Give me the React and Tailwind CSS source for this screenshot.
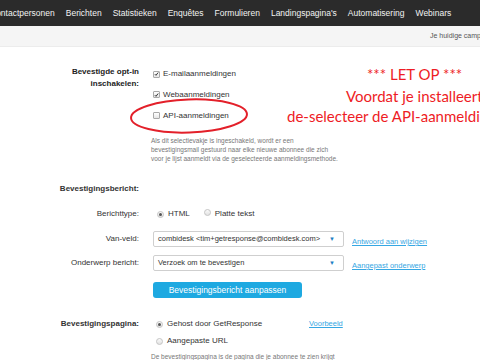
import React from 'react';

const navItems = ['Contactpersonen', 'Berichten', 'Statistieken', 'Enquêtes', 'Formulieren', "Landingspagina's", 'Automatisering', 'Webinars'];

const Checkbox = ({ checked }) => (
  <span className="inline-flex items-center justify-center w-[7px] h-[7px] border border-[#a9a9a9] rounded-[1px] bg-gradient-to-b from-white to-[#e6e6e6]">
    {checked && (
      <svg width="6" height="6" viewBox="0 0 6 6">
        <path d="M1 3.2 L2.4 4.6 L5 1.2" stroke="#333" strokeWidth="1.2" fill="none" />
      </svg>
    )}
  </span>
);

const Radio = ({ checked }) => (
  <span className="inline-flex items-center justify-center w-[7px] h-[7px] rounded-full border border-[#c4c4c4] bg-gradient-to-b from-[#fafafa] to-[#e2e2e2]">
    {checked && <span className="w-[3px] h-[3px] rounded-full bg-[#555]" />}
  </span>
);

const Row = ({ label, bold, className, children }) => (
  <div className={`grid grid-cols-[140px_1fr] gap-x-[13px] items-center ${className}`}>
    <div className={`text-right pr-[1px] text-[8px] text-[#333] whitespace-nowrap ${bold ? 'font-bold text-[#222]' : ''}`}>{label}</div>
    <div className="flex items-center">{children}</div>
  </div>
);

const SelectBox = ({ value }) => (
  <div className="w-[191px] h-[16px] border border-[#cfcfcf] rounded-[2px] flex items-center justify-between pl-[4px] pr-[8px] text-[7.5px] text-[#333] whitespace-nowrap">
    <span>{value}</span>
    <span className="text-[6px] text-[#1b7fc4]">▼</span>
  </div>
);

const LinkText = ({ children }) => (
  <span className="text-[7.5px] text-[#35a7e3] underline whitespace-nowrap">{children}</span>
);

export default function App() {
  return (
    <div className="relative w-[480px] h-[360px] overflow-hidden bg-white font-['Liberation_Sans',Arial,sans-serif]">
      {/* top navigation */}
      <div className="h-[26px] bg-[#2b2b2b] flex items-center overflow-hidden">
        <div className="flex gap-[11px] ml-[-10px] text-[8.5px] text-[#f2f2f2] whitespace-nowrap">
          {navItems.map((item) => (
            <span key={item}>{item}</span>
          ))}
        </div>
      </div>

      {/* campaign bar */}
      <div className="h-[21px] bg-[#f5f5f5] border-b border-[#ececec] flex items-center pl-[430px] overflow-hidden">
        <span className="text-[7px] text-[#555] whitespace-nowrap">Je huidige campagne: combidesk</span>
      </div>

      {/* opt-in */}
      <div className="grid grid-cols-[140px_1fr] gap-x-[13px] mt-[17px]">
        <div className="text-right pr-[1px] font-bold text-[8px] leading-[12px] text-[#222] mt-[2px]">
          Bevestigde opt-in
          <br />
          inschakelen:
        </div>
        <div className="flex flex-col">
          <div className="h-[20px] flex items-center gap-[3px] text-[8px] text-[#333]">
            <Checkbox checked />
            <span>E-mailaanmeldingen</span>
          </div>
          <div className="h-[21px] flex items-center gap-[3px] text-[8px] text-[#333]">
            <Checkbox checked />
            <span>Webaanmeldingen</span>
          </div>
          <div className="h-[21px] flex items-center gap-[3px] text-[8px] text-[#333]">
            <Checkbox />
            <span>API-aanmeldingen</span>
          </div>
          <p className="mt-[10px] ml-[-2px] text-[6.5px] leading-[9px] text-[#777]">
            Als dit selectievakje is ingeschakeld, wordt er een
            <br />
            bevestigingsmail gestuurd naar elke nieuwe abonnee die zich
            <br />
            voor je lijst aanmeldt via de geselecteerde aanmeldingsmethode.
          </p>
        </div>
      </div>

      {/* bevestigingsbericht */}
      <Row label="Bevestigingsbericht:" bold className="h-[12px] mt-[20px]" />

      <Row label="Berichttype:" className="h-[14px] mt-[12px]">
        <div className="flex items-center ml-[4px] text-[8px] text-[#333]">
          <Radio checked />
          <span className="ml-[4px]">HTML</span>
          <span className="ml-[14px]"><Radio /></span>
          <span className="ml-[4px]">Platte tekst</span>
        </div>
      </Row>

      <Row label="Van-veld:" className="h-[16px] mt-[6px]">
        <SelectBox value="combidesk <tim+getresponse@combidesk.com>" />
        <span className="ml-[8px]"><LinkText>Antwoord aan wijzigen</LinkText></span>
      </Row>

      <Row label="Onderwerp bericht:" className="h-[16px] mt-[8px]">
        <SelectBox value="Verzoek om te bevestigen" />
        <span className="ml-[8px]"><LinkText>Aangepast onderwerp</LinkText></span>
      </Row>

      <Row label="" className="h-[16px] mt-[15px]">
        <button className="w-[149px] h-[16px] rounded-[3px] bg-[#1ea9e1] text-white text-[8.5px] whitespace-nowrap">
          Bevestigingsbericht aanpassen
        </button>
      </Row>

      {/* bevestigingspagina */}
      <Row label="Bevestigingspagina:" bold className="h-[14px] mt-[19px]">
        <div className="w-[153px] flex items-center ml-[3px] text-[8px] text-[#333]">
          <Radio checked />
          <span className="ml-[4px]">Gehost door GetResponse</span>
        </div>
        <LinkText>Voorbeeld</LinkText>
      </Row>

      <Row label="" className="h-[14px] mt-[3px]">
        <div className="flex items-center ml-[3px] text-[8px] text-[#333]">
          <Radio />
          <span className="ml-[4px]">Aangepaste URL</span>
        </div>
      </Row>

      <div className="ml-[151px] mt-[4px] text-[6.5px] leading-[9px] text-[#777] whitespace-nowrap">
        De bevestigingspagina is de pagina die je abonnee te zien krijgt
      </div>

      {/* annotation */}
      <svg className="absolute left-[128px] top-[97px]" width="122" height="38" viewBox="0 0 122 38">
        <ellipse cx="61" cy="19" rx="58" ry="16.5" fill="none" stroke="#e3202a" strokeWidth="2" transform="rotate(-2 61 19)" />
      </svg>
      <div className="absolute left-[287px] top-[64px] font-['Lato',sans-serif] text-[15px] leading-[20px] text-[#ee1c25] whitespace-nowrap">
        <div className="pl-[80px]">*** LET OP ***</div>
        <div className="pl-[59px] mt-[2px]">Voordat je installeert</div>
        <div>de-selecteer de API-aanmeldingen</div>
      </div>
    </div>
  );
}
